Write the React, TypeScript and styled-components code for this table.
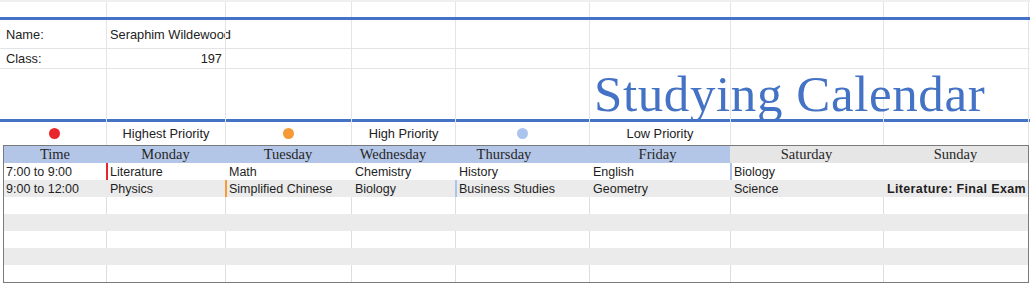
import React from 'react';
import styled, { createGlobalStyle } from 'styled-components';

const COLS = [106, 119, 126, 104, 134, 141, 153, 146];
const TABLE_COLS = [102, 119, 126, 104, 134, 141, 153, 145];
const BLUE = '#4472c4';
const GRID = '#e2e4e8';

type Priority = 'highest' | 'high' | 'low';

const priorityColor: Record<Priority, string> = {
  highest: '#e8262c',
  high: '#f59a34',
  low: '#abc4ee',
};

type Entry = { text: string; priority?: Priority; bold?: boolean };

const days = [
  { name: 'Time', tone: 'blue', shift: 0 },
  { name: 'Monday', tone: 'blue', shift: 0 },
  { name: 'Tuesday', tone: 'blue', shift: 0 },
  { name: 'Wednesday', tone: 'blue', shift: 20 },
  { name: 'Thursday', tone: 'blue', shift: 36 },
  { name: 'Friday', tone: 'blue', shift: 4 },
  { name: 'Saturday', tone: 'gray', shift: 0 },
  { name: 'Sunday', tone: 'gray', shift: 0 },
];

const schedule: Entry[][] = [
  [
    { text: '7:00 to 9:00' },
    { text: 'Literature', priority: 'highest' },
    { text: 'Math' },
    { text: 'Chemistry' },
    { text: 'History' },
    { text: 'English' },
    { text: 'Biology', priority: 'low' },
    { text: '' },
  ],
  [
    { text: '9:00 to 12:00' },
    { text: 'Physics' },
    { text: 'Simplified Chinese', priority: 'high' },
    { text: 'Biology' },
    { text: 'Business Studies', priority: 'low' },
    { text: 'Geometry' },
    { text: 'Science' },
    { text: 'Literature: Final Exam', bold: true },
  ],
];

const EMPTY_ROWS = 5;

const legend: { priority: Priority; label: string }[] = [
  { priority: 'highest', label: 'Highest Priority' },
  { priority: 'high', label: 'High Priority' },
  { priority: 'low', label: 'Low Priority' },
];

const GlobalStyle = createGlobalStyle`
  html, body {
    margin: 0;
    padding: 0;
    background: #fff;
  }
  body {
    font-family: 'Liberation Sans', Arial, sans-serif;
    color: #222;
  }
  * {
    box-sizing: border-box;
  }
`;

const Sheet = styled.div`
  width: 1030px;
  overflow: hidden;
`;

const Row = styled.div<{ $h: number; $rule?: 'blue' | 'grid' | 'none'; $top?: boolean }>`
  display: grid;
  grid-template-columns: ${COLS.map(c => `${c}px`).join(' ')};
  height: ${p => p.$h}px;
  border-top: ${p => (p.$top ? '2px solid #efefef' : 'none')};
  border-bottom: ${p =>
    p.$rule === 'blue' ? `3px solid ${BLUE}` : p.$rule === 'none' ? 'none' : `1px solid ${GRID}`};
`;

const Cell = styled.div<{ $align?: 'left' | 'right' | 'center' }>`
  display: flex;
  align-items: center;
  justify-content: ${p =>
    p.$align === 'right' ? 'flex-end' : p.$align === 'center' ? 'center' : 'flex-start'};
  padding: 0 3px;
  border-left: 1px solid ${GRID};
  font-size: 12.8px;
  white-space: nowrap;
  min-width: 0;

  &:first-child {
    border-left: none;
    padding-left: 6px;
  }
  &:last-child {
    border-right: 1px solid ${GRID};
  }
`;

const TitleCell = styled(Cell)`
  align-items: flex-end;
  padding: 0 0 5px 4px;
`;

const Title = styled.h1`
  position: relative;
  z-index: 1;
  margin: 0;
  font-family: 'Liberation Serif', 'Times New Roman', serif;
  font-weight: 400;
  font-size: 51px;
  line-height: 1;
  letter-spacing: 0.6px;
  color: ${BLUE};
`;

const LegendLabel = styled.span`
  font-size: 12.8px;
  color: #222;
`;

const Dot = styled.span<{ $color: string }>`
  width: 11px;
  height: 11px;
  border-radius: 50%;
  background: ${p => p.$color};
`;

const Table = styled.div`
  margin-left: 3px;
  width: 1026px;
  border: 1px solid #7a7a7a;
`;

const TableRow = styled.div<{ $shade?: boolean }>`
  display: grid;
  grid-template-columns: ${TABLE_COLS.map(c => `${c}px`).join(' ')};
  height: 17px;
  background: ${p => (p.$shade ? '#ebebeb' : '#fff')};
`;

const HeadCell = styled.div<{ $tone: string; $shift: number }>`
  display: flex;
  align-items: center;
  justify-content: center;
  padding-right: ${p => p.$shift}px;
  background: ${p => (p.$tone === 'blue' ? '#b4c6e7' : '#e7e6e6')};
  font-family: 'Liberation Serif', 'Times New Roman', serif;
  font-size: 14.5px;
  color: #262626;
  white-space: nowrap;
`;

const DataCell = styled.div<{ $mark?: string; $lines?: boolean; $bold?: boolean }>`
  display: flex;
  align-items: center;
  padding-left: ${p => (p.$mark ? 2 : 3)}px;
  border-left: ${p =>
    p.$mark ? `2px solid ${p.$mark}` : `1px solid ${p.$lines ? '#dedede' : 'transparent'}`};
  font-size: 12.5px;
  font-weight: ${p => (p.$bold ? 700 : 400)};
  letter-spacing: ${p => (p.$bold ? '0.35px' : 'normal')};
  color: #1e1e1e;
  white-space: nowrap;
  overflow: hidden;

  &:first-child {
    border-left: none;
    padding-left: 2px;
  }
`;

const blanks = (n: number) => Array.from({ length: n }, (_, i) => <Cell key={`b-${i}`} />);

const App = () => {
  return (
    <Sheet>
      <GlobalStyle />
      <Row $h={20} $rule='blue' $top>
        {blanks(8)}
      </Row>
      <Row $h={29}>
        <Cell>Name:</Cell>
        <Cell>Seraphim Wildewood</Cell>
        {blanks(6)}
      </Row>
      <Row $h={20}>
        <Cell>Class:</Cell>
        <Cell $align='right'>197</Cell>
        {blanks(6)}
      </Row>
      <Row $h={53} $rule='blue'>
        {blanks(5)}
        <TitleCell>
          <Title>Studying Calendar</Title>
        </TitleCell>
        {blanks(2)}
      </Row>
      <Row $h={23} $rule='none'>
        {legend.map(item => (
          <React.Fragment key={item.label}>
            <Cell $align='center'>
              <Dot $color={priorityColor[item.priority]} />
            </Cell>
            <Cell $align='center'>
              <LegendLabel>{item.label}</LegendLabel>
            </Cell>
          </React.Fragment>
        ))}
        {blanks(2)}
      </Row>
      <Table>
        <TableRow>
          {days.map(d => (
            <HeadCell key={d.name} $tone={d.tone} $shift={d.shift}>
              {d.name}
            </HeadCell>
          ))}
        </TableRow>
        {schedule.map((row, i) => (
          <TableRow key={`row-${i}`} $shade={i % 2 === 1}>
            {row.map((entry, j) => (
              <DataCell
                key={`c-${i}-${j}`}
                $mark={entry.priority ? priorityColor[entry.priority] : undefined}
                $bold={entry.bold}
              >
                {entry.text}
              </DataCell>
            ))}
          </TableRow>
        ))}
        {Array.from({ length: EMPTY_ROWS }, (_, i) => {
          const shade = i % 2 === 1;
          return (
            <TableRow key={`empty-${i}`} $shade={shade}>
              {TABLE_COLS.map((_, j) => (
                <DataCell key={`e-${i}-${j}`} $lines={!shade} />
              ))}
            </TableRow>
          );
        })}
      </Table>
    </Sheet>
  );
};

export default App;
